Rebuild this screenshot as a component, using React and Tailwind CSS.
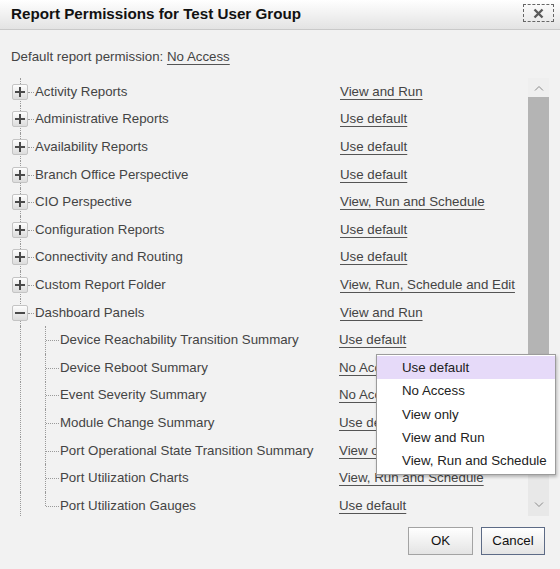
import React from "react";

const TOP_ROWS = [
  { label: "Activity Reports", perm: "View and Run" },
  { label: "Administrative Reports", perm: "Use default" },
  { label: "Availability Reports", perm: "Use default" },
  { label: "Branch Office Perspective", perm: "Use default" },
  { label: "CIO Perspective", perm: "View, Run and Schedule" },
  { label: "Configuration Reports", perm: "Use default" },
  { label: "Connectivity and Routing", perm: "Use default" },
  { label: "Custom Report Folder", perm: "View, Run, Schedule and Edit" },
];

const CHILD_ROWS = [
  { label: "Device Reachability Transition Summary", perm: "Use default" },
  { label: "Device Reboot Summary", perm: "No Access" },
  { label: "Event Severity Summary", perm: "No Access" },
  { label: "Module Change Summary", perm: "Use default" },
  { label: "Port Operational State Transition Summary", perm: "View only" },
  { label: "Port Utilization Charts", perm: "View, Run and Schedule" },
  { label: "Port Utilization Gauges", perm: "Use default" },
];

const MENU = ["Use default", "No Access", "View only", "View and Run", "View, Run and Schedule"];

const ToggleIcon = ({ open }) => (
  <div className="relative z-10 w-[16px] h-[16px] rounded-[2px] border border-[#c4c4c4] bg-gradient-to-b from-[#fdfdfd] to-[#dcdcdc] flex items-center justify-center">
    <svg width="10" height="10" viewBox="0 0 10 10">
      <rect x="0" y="4" width="10" height="2" fill="#4a4a4a" />
      {!open && <rect x="4" y="0" width="2" height="10" fill="#4a4a4a" />}
    </svg>
  </div>
);

const PermLink = ({ text, className = "" }) => (
  <span className={"underline underline-offset-[3px] decoration-[#555] text-[#444] " + className}>{text}</span>
);

const TopRow = ({ label, perm, open }) => (
  <div className="flex items-center h-[27.6px] shrink-0">
    <div className="relative w-[24px] h-full flex items-center">
      <div className="absolute left-[9px] top-0 bottom-0 border-l border-dotted border-[#9a9a9a]" />
      <div className="absolute left-[17px] w-[6px] top-1/2 border-t border-dotted border-[#9a9a9a]" />
      <div className="ml-[1px]">
        <ToggleIcon open={open} />
      </div>
    </div>
    <div className="w-[305px] text-[#444] whitespace-nowrap">{label}</div>
    <PermLink text={perm} />
  </div>
);

const ChildRow = ({ label, perm, last }) => (
  <div className="flex items-center h-[27.6px] shrink-0">
    <div className="relative w-[24px] h-full">
      <div className="absolute left-[9px] top-0 bottom-0 border-l border-dotted border-[#9a9a9a]" />
    </div>
    <div className="relative w-[25px] h-full">
      <div
        className={
          "absolute left-[10px] top-0 border-l border-dotted border-[#9a9a9a] " +
          (last ? "h-1/2" : "bottom-0")
        }
      />
      <div className="absolute left-[11px] right-[1px] top-1/2 border-t border-dotted border-[#9a9a9a]" />
    </div>
    <div className="w-[279px] text-[#444] whitespace-nowrap">{label}</div>
    <PermLink text={perm} />
  </div>
);

export default function App() {
  return (
    <div className="relative w-[560px] h-[569px] overflow-hidden bg-[#f2f2f2] flex flex-col font-['Liberation_Sans',Arial,sans-serif] text-[13.3px]">
      {/* title bar */}
      <div className="h-[30px] shrink-0 flex items-center justify-between pl-[11px] pr-[6px] bg-gradient-to-b from-white to-[#e3e3e3] border-b border-[#c9c9c9]">
        <div className="text-[15.2px] font-bold text-[#111]">Report Permissions for Test User Group</div>
        <button className="w-[31px] h-[18px] border border-dashed border-[#666] flex items-center justify-center mb-[3px]">
          <svg width="11" height="11" viewBox="0 0 11 11">
            <path d="M1.5 1.5 L9.5 9.5 M9.5 1.5 L1.5 9.5" stroke="#5a5a5a" strokeWidth="2.4" />
          </svg>
        </button>
      </div>

      <div className="flex flex-col flex-1 pl-[11px] pr-[11px]">
        <div className="pt-[19px] h-[16px] box-content text-[#444] leading-[16px]">
          Default report permission: <PermLink text="No Access" />
        </div>

        <div className="mt-[12px] h-[439px] flex overflow-hidden">
          <div className="flex-1 flex flex-col overflow-hidden pt-[1px]">
            {TOP_ROWS.map((r, i) => (
              <TopRow key={i} label={r.label} perm={r.perm} />
            ))}
            <TopRow label="Dashboard Panels" perm="View and Run" open />
            {CHILD_ROWS.map((r, i) => (
              <ChildRow key={i} label={r.label} perm={r.perm} last={i === CHILD_ROWS.length - 1} />
            ))}
          </div>
          {/* scrollbar */}
          <div className="w-[21px] mt-[1px] bg-[#e8e8e8] flex flex-col">
            <div className="h-[19px] bg-[#efefef] flex items-center justify-center">
              <svg width="10" height="6" viewBox="0 0 10 6">
                <path d="M1 5.5 L5 1.5 L9 5.5" fill="none" stroke="#8a8a8a" strokeWidth="1" />
              </svg>
            </div>
            <div className="h-[345px] bg-[#b4b4b4]" />
            <div className="flex-1" />
            <div className="h-[22px] flex items-center justify-center">
              <svg width="10" height="6" viewBox="0 0 10 6">
                <path d="M1 0.5 L5 4.5 L9 0.5" fill="none" stroke="#8a8a8a" strokeWidth="1" />
              </svg>
            </div>
          </div>
        </div>

        <div className="mt-[11px] flex justify-end gap-[8px] pr-[4px]">
          <button className="w-[65px] h-[28px] border border-[#a3a3a3] bg-gradient-to-b from-white to-[#e4e4e4] text-[#111] text-[13.3px]">
            OK
          </button>
          <button className="w-[64px] h-[28px] border border-[#5d6b86] bg-gradient-to-b from-white to-[#e4e4e4] text-[#111] text-[13.3px]">
            Cancel
          </button>
        </div>
      </div>

      {/* open permission dropdown */}
      <div className="absolute left-[376px] top-[354px] w-[180px] py-[1px] bg-white border border-[#9c9c9c] shadow-[1px_2px_3px_rgba(0,0,0,0.25)]">
        {MENU.map((m, i) => (
          <div
            key={i}
            className={"h-[23.4px] flex items-center pl-[25px] text-[#222] " + (i === 0 ? "bg-[#e6daf9]" : "")}
          >
            {m}
          </div>
        ))}
      </div>
    </div>
  );
}
